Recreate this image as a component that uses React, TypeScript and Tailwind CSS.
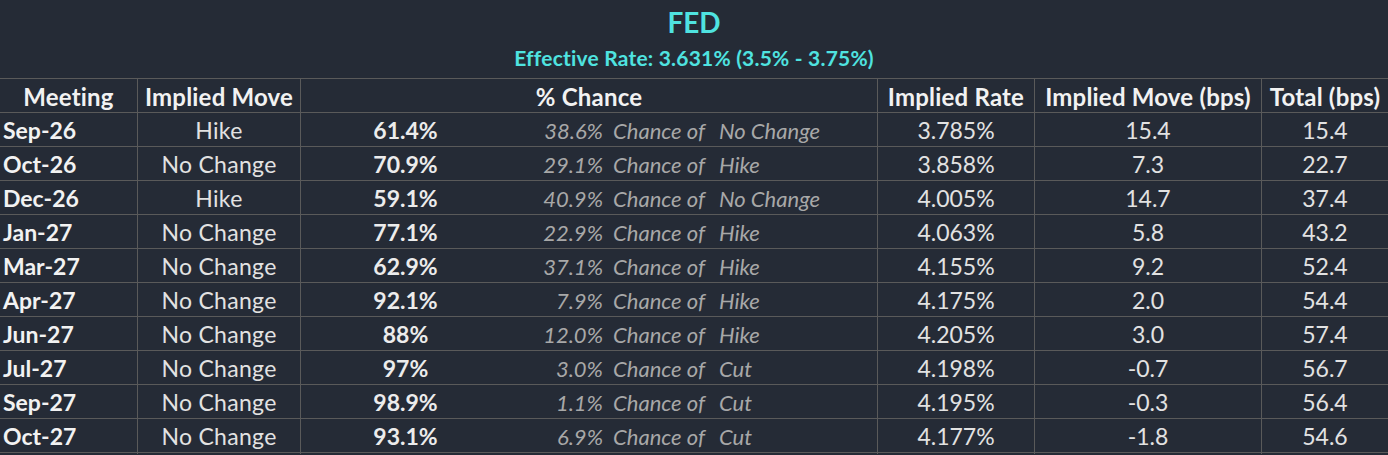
const rows = [
  { m: "Sep-26", move: "Hike", p: "61.4%", alt: "38.6%", altMove: "No Change", rate: "3.785%", bps: "15.4", total: "15.4" },
  { m: "Oct-26", move: "No Change", p: "70.9%", alt: "29.1%", altMove: "Hike", rate: "3.858%", bps: "7.3", total: "22.7" },
  { m: "Dec-26", move: "Hike", p: "59.1%", alt: "40.9%", altMove: "No Change", rate: "4.005%", bps: "14.7", total: "37.4" },
  { m: "Jan-27", move: "No Change", p: "77.1%", alt: "22.9%", altMove: "Hike", rate: "4.063%", bps: "5.8", total: "43.2" },
  { m: "Mar-27", move: "No Change", p: "62.9%", alt: "37.1%", altMove: "Hike", rate: "4.155%", bps: "9.2", total: "52.4" },
  { m: "Apr-27", move: "No Change", p: "92.1%", alt: "7.9%", altMove: "Hike", rate: "4.175%", bps: "2.0", total: "54.4" },
  { m: "Jun-27", move: "No Change", p: "88%", alt: "12.0%", altMove: "Hike", rate: "4.205%", bps: "3.0", total: "57.4" },
  { m: "Jul-27", move: "No Change", p: "97%", alt: "3.0%", altMove: "Cut", rate: "4.198%", bps: "-0.7", total: "56.7" },
  { m: "Sep-27", move: "No Change", p: "98.9%", alt: "1.1%", altMove: "Cut", rate: "4.195%", bps: "-0.3", total: "56.4" },
  { m: "Oct-27", move: "No Change", p: "93.1%", alt: "6.9%", altMove: "Cut", rate: "4.177%", bps: "-1.8", total: "54.6" },
];

const grid = "grid grid-cols-[137px_163px_577px_157px_227px_127px]";
const cell = "flex items-center justify-center border-l border-[#5a5a5a]";

export default function App() {
  return (
    <div className="w-[1388px] h-[455px] bg-[#252b36] font-['Lato',sans-serif] text-[#e2e2e2] overflow-hidden">
      <div className="h-[78px] flex flex-col items-center pt-[6px] text-[#4fe3e0] font-bold">
        <div className="text-[28px] leading-[32px]">FED</div>
        <div className="text-[21px] leading-[24px] mt-[8px] tracking-[0.2px]">Effective Rate: 3.631% (3.5% - 3.75%)</div>
      </div>

      <div className={`${grid} h-[35px] border-y border-[#5a5a5a] text-[24px] font-bold text-[#f2f2f2] tracking-[0.2px]`}>
        <div className="flex items-center justify-center">Meeting</div>
        <div className={cell}>Implied Move</div>
        <div className={cell}>% Chance</div>
        <div className={cell}>Implied Rate</div>
        <div className={cell}>Implied Move (bps)</div>
        <div className={cell}>Total (bps)</div>
      </div>

      {rows.map((r) => (
        <div key={r.m} className={`${grid} h-[34px] border-b border-[#5a5a5a] text-[23px]`}>
          <div className="flex items-center pl-[3px] font-bold text-[#f2f2f2]">{r.m}</div>
          <div className={`${cell} tracking-[0.3px]`}>{r.move}</div>
          <div className="flex items-center border-l border-[#5a5a5a] italic text-[22px] text-[#a8a8a8]">
            <span className="w-[209px] text-center not-italic text-[23px] font-bold text-[#ececec]">{r.p}</span>
            <span className="w-[93px] text-right">{r.alt}</span>
            <span className="w-[116px] pl-[10px]">Chance of</span>
            <span>{r.altMove}</span>
          </div>
          <div className={cell}>{r.rate}</div>
          <div className={cell}>{r.bps}</div>
          <div className={cell}>{r.total}</div>
        </div>
      ))}
    </div>
  );
}
